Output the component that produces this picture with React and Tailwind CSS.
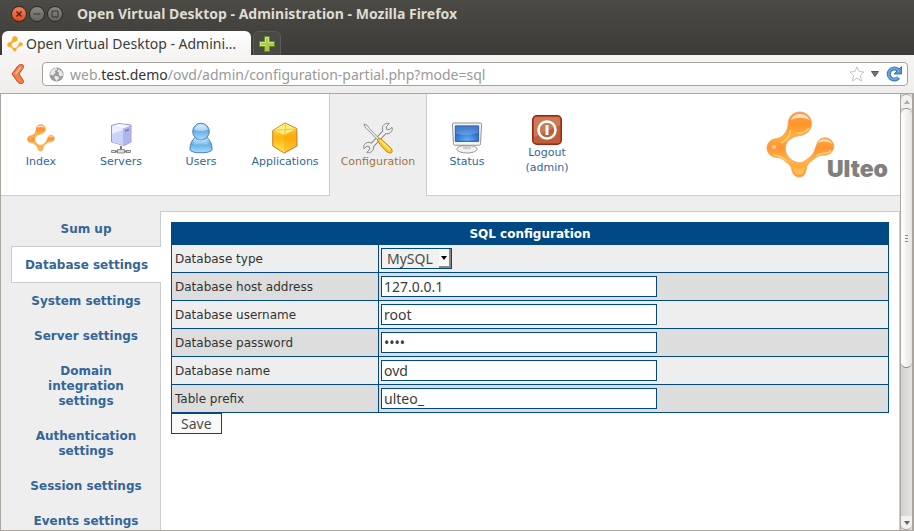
import React from "react";

const ui = "font-['Noto_Sans','Open_Sans',sans-serif]";

function MoleculeShape({ className, fill = "url(#orange)", detailed = true }) {
  return (
    <svg viewBox="-1 -1 69 68" className={className} aria-hidden="true">
      <defs>
        <linearGradient id="orange" x1="0" y1="0" x2="0" y2="1">
          <stop offset="0" stopColor="#ff9b45" />
          <stop offset="0.2" stopColor="#ff962a" />
          <stop offset="0.38" stopColor="#ffb13c" />
          <stop offset="0.55" stopColor="#ff9330" />
          <stop offset="0.75" stopColor="#ffb545" />
          <stop offset="1" stopColor="#ff9a28" />
        </linearGradient>
      </defs>
      <path
        d="M21.300 11C21.500 4 27 0 33 0s11.500 5 11.500 11.500c0 6-4.500 11-11 12C27 24 18.300 28 18.300 36.300c0 6 3.500 10 8.500 13 4 2 8 2 11-.5 5-3 9-7 10-11 .5-2 1-3 1.900-5 1-4 4-7 8.300-7 5 0 8.700 4 8.700 8.500S63 43 58 43c-6 0-9 2-12.300 5-4 3-6 5-6.500 9-.5 5-3 8-7 8s-6.700-3-7.500-8c-.7-3-2.500-5-5.700-7-3-3-6-4.500-10-4.700C4 45 0 41 0 36s4-9 9-9.200c6-.8 12-6 12.300-15.800z"
        fill={fill}
        stroke="#f0a060"
        strokeWidth="0.800"
      />
      {detailed && (
        <g>
          <path d="M24 8c1-4 5-6 9-6s8 2 9.500 6c-6-3-13-3-18.500 0zM51 31c2-5 12-5 14 1-4-3-10-3-14-1z" fill="#ffe9cc" opacity="0.900" />
          <path d="M23 18c1 6-4 11-9 13M6 43c6 0 10 3 14 6m29-5c3-2 6-3 10-3 2 0 4-1 5-3M30 21c4 1 9-1 12-5" fill="none" stroke="#ffd98c" strokeWidth="1.500" opacity="0.800" />
          <path d="M26 55c3 2 9 2 12 0-1 5-2 8-6 8s-5-3-6-8z" fill="#ffc262" opacity="0.700" />
          <ellipse cx="7" cy="35" rx="2.500" ry="2" fill="#ffc78f" />
        </g>
      )}
    </svg>
  );
}

function ServerIcon() {
  return (
    <svg viewBox="0 0 24 32" className="h-8 w-6" aria-hidden="true">
      <path d="M2.500 3.500L10 1.500l12 1.500v17l-7 3.500L2.500 20z" fill="#c3caf6" stroke="#7f84b5" strokeWidth="0.800" />
      <path d="M3 4l11 2.500V23L3 19.700z" fill="#eceeff" />
      <path d="M3 12l11-4v15L3 19.700z" fill="#c9d2fb" />
      <path d="M14 6.500L21.500 3.500v16.200L14 23z" fill="#b0b6ec" />
      <path d="M3 4l7-2 11.500 1.500-7.500 3z" fill="#f6f7ff" />
      <path d="M16 8l4-1.500v2L16 10z" fill="#7d83b5" />
      <path d="M12 24v4M3 29.500h18" stroke="#777" strokeWidth="2" />
      <path d="M8.500 27.500h7v3.500h-7zM2.500 28.500h4v2h-4zM17.500 28.500h4v2h-4z" fill="#ddd" stroke="#777" strokeWidth="0.800" />
    </svg>
  );
}

function UserIcon() {
  return (
    <svg viewBox="0 0 26 34" className="h-8 w-6" aria-hidden="true">
      <defs>
        <linearGradient id="blue" x1="0" y1="0" x2="0" y2="1">
          <stop offset="0" stopColor="#cde8fb" />
          <stop offset="0.45" stopColor="#63aee8" />
          <stop offset="1" stopColor="#a9dcfa" />
        </linearGradient>
      </defs>
      <path d="M7 16c-4 3-6 8-6 13 0 3 6 4 12 4s12-1 12-4c0-5-2-10-6-13z" fill="url(#blue)" stroke="#3e78ae" />
      <circle cx="13" cy="10" r="9" fill="url(#blue)" stroke="#3e78ae" />
      <path d="M6 8c1-7 13-7 14 0-4 2-10 2-14 0z" fill="#fff" opacity="0.45" />
      <path d="M5 24c0-5 5-6 8-6s7 1 8 6" fill="#fff" opacity="0.25" />
    </svg>
  );
}

function BoxIcon() {
  return (
    <svg viewBox="0 0 28 34" className="h-8 w-7" aria-hidden="true">
      <defs>
        <linearGradient id="gold" x1="0" y1="0" x2="0" y2="1">
          <stop offset="0" stopColor="#ffe34a" />
          <stop offset="0.5" stopColor="#ffb310" />
          <stop offset="1" stopColor="#ffe65a" />
        </linearGradient>
      </defs>
      <path d="M3 26l12 7 12.500-7V10z" fill="#888" opacity="0.350" />
      <path d="M14 1l12.500 6v18.500L13 33 1 25.500V9z" fill="url(#gold)" stroke="#c87b0c" />
      <path d="M13 13.500L26 7.500v17.500L13 32.500z" fill="#f39a06" opacity="0.350" />
      <path d="M14 1.500L26 7.500 13 13.500 1.500 9z" fill="#ffee80" />
      <path d="M14 2l1 6L2 9M15 8l11-.5M15 8l-2 5.500" fill="none" stroke="#eab22e" strokeWidth="0.800" />
    </svg>
  );
}

function ToolsIcon() {
  return (
    <svg viewBox="0 0 32 33" className="size-8" aria-hidden="true">
      <path d="M8 26L25 8" stroke="#858888" strokeWidth="5" />
      <path
        d="M27.500 1.500c-4-1-7.500 2-7 6 .5 3 3 5 6 4.500 3-.5 5-3.500 4-6.500l-3 2.500-2.500-.5-.5-2.500zM4.500 31.500c4 1 7.500-2 7-6-.5-3-3-5-6-4.500-3 .5-5 3.500-4 6.500l3-2.500 2.500.5.500 2.500z"
        fill="#ececec"
        stroke="#858888"
      />
      <path d="M9 25L24 9" stroke="#f1f2f2" strokeWidth="3" />
      <path d="M1.500 2l3.500 1.500 2 3L17 17l-1.500 1.500L5.500 8 3 6z" fill="#eee" stroke="#7d7d7d" strokeWidth="0.800" />
      <path d="M15.500 19c0-1.500 1.500-2.500 3-2l9.500 8.500c4 4 3 6.500.5 6.500-4 0-10-8-13-13z" fill="#ffc61c" stroke="#b98319" />
      <path d="M18.500 19l10 10" stroke="#ffed91" strokeWidth="1.500" />
    </svg>
  );
}

function MonitorIcon() {
  return (
    <svg viewBox="0 0 32 33" className="size-8" aria-hidden="true">
      <defs>
        <radialGradient id="screen" cx="0.5" cy="0.9" r="0.8">
          <stop offset="0" stopColor="#63adf5" />
          <stop offset="1" stopColor="#1450b5" />
        </radialGradient>
      </defs>
      <ellipse cx="16" cy="28" rx="10.500" ry="4" fill="#f2f2f2" stroke="#999" />
      <path d="M12 24h8v4h-8z" fill="#ccc" />
      <path d="M2 1h28c1 0 1 1 1 2l-1 19c0 2-1 2-2 2H4c-1 0-2 0-2-2L1 3c0-1 0-2 1-2z" fill="#f5f5f5" stroke="#8e8e8e" />
      <path d="M4 4h24v16H4z" fill="url(#screen)" stroke="#2e5ba2" />
      <path d="M4.500 4.500h23V11c-8 3-15 3-23 1z" fill="#8fc3f6" opacity="0.4" />
    </svg>
  );
}

function PowerIcon() {
  return (
    <svg viewBox="0 0 30 30" className="size-[30px]" aria-hidden="true">
      <rect x="0.750" y="0.750" width="28.500" height="28.500" rx="4" fill="#bd6039" stroke="#a32014" strokeWidth="1.500" />
      <path d="M2 5c0-2 1-3 3-3h20c2 0 3 1 3 3v5L2 22z" fill="#d58c69" opacity="0.600" />
      <circle cx="15" cy="15" r="8.500" fill="none" stroke="#fff" strokeWidth="2.500" />
      <path d="M15 10v10" stroke="#fff" strokeWidth="3" />
    </svg>
  );
}

const navItems = [
  { label: "Index", icon: <MoleculeShape className="mt-0.5 mb-0.5 size-7" />, width: "w-20" },
  { label: "Servers", icon: <ServerIcon />, width: "w-20" },
  { label: "Users", icon: <UserIcon />, width: "w-20" },
  { label: "Applications", icon: <BoxIcon />, width: "w-[88px]" },
  { label: "Configuration", icon: <ToolsIcon />, width: "w-[98px]", active: true },
  { label: "Status", icon: <MonitorIcon />, width: "w-20" },
  { label: "Logout (admin)", icon: <PowerIcon />, width: "w-20" },
];

const sideItems = [
  "Sum up",
  "Database settings",
  "System settings",
  "Server settings",
  "Domain integration settings",
  "Authentication settings",
  "Session settings",
  "Events settings",
];

const fields = [
  { id: "type", label: "Database type", select: true },
  { id: "host", label: "Database host address", value: "127.0.0.1" },
  { id: "user", label: "Database username", value: "root" },
  { id: "password", label: "Database password", value: "ovd1", type: "password" },
  { id: "name", label: "Database name", value: "ovd" },
  { id: "prefix", label: "Table prefix", value: "ulteo_" },
];

function TitleBar() {
  const button = "flex size-4 items-center justify-center rounded-full border border-[#2b2a27]";
  return (
    <div className="flex h-[31px] shrink-0 items-center gap-[2px] pb-[3px] pl-[11px]">
      <button aria-label="Close" className={`${button} bg-linear-to-b from-[#f58059] to-[#df4a1b]`}>
        <svg viewBox="0 0 8 8" className="size-2"><path d="M1.500 1.500l5 5m0-5l-5 5" stroke="#4a1c0c" strokeWidth="1.200" /></svg>
      </button>
      <button aria-label="Minimize" className={`${button} bg-linear-to-b from-[#8b887f] to-[#66645d]`}>
        <svg viewBox="0 0 8 8" className="size-2"><path d="M0.500 4h7" stroke="#33322e" /></svg>
      </button>
      <button aria-label="Maximize" className={`${button} bg-linear-to-b from-[#8b887f] to-[#66645d]`}>
        <svg viewBox="0 0 8 8" className="size-2"><path d="M1 1h6v6H1z" fill="none" stroke="#33322e" /></svg>
      </button>
      <h1 className="ml-3 truncate text-sm font-bold text-[#dfdbd2]">
        Open Virtual Desktop - Administration - Mozilla Firefox
      </h1>
    </div>
  );
}

function TabStrip() {
  return (
    <div className="flex h-6 shrink-0 gap-0.5 pl-0.5">
      <button className="flex w-[249px] items-center gap-[3px] rounded-t-md bg-linear-to-b from-white to-[#f5f4f2] px-[5px] pt-0.5 text-sm text-[#3c3c3c]">
        <MoleculeShape className="size-4 shrink-0" fill="#fbae17" detailed={false} />
        <span className="whitespace-nowrap">Open Virtual Desktop - Admini…</span>
      </button>
      <button aria-label="New tab" className="flex w-7 items-center justify-center rounded-t-md border border-b-0 border-[#5c5b55] bg-[#4a4944]">
        <svg viewBox="0 0 16 16" className="size-4"><path d="M5.500.5h5v5h5v5h-5v5h-5v-5h-5v-5h5z" fill="#a9cb45" stroke="#5f8f1d" /><path d="M6.500 10V9.500h-5v-3h5v-5h3v5h5" fill="none" stroke="#d3e88d" /></svg>
      </button>
    </div>
  );
}

function AddressBar() {
  return (
    <div className="flex h-[39px] shrink-0 items-center border-b border-[#aaa69f] bg-linear-to-b from-[#f6f5f3] to-[#efeeec] pr-[6px] pl-[11px]">
      <button aria-label="Back" className="w-[31px]">
        <svg viewBox="0 0 13 20" className="h-5 w-[13px]"><path d="M10.500.5c2 0 2.500 2 1.500 3.500L8 10l4 6c1 2 .5 3.500-1.500 3.500S7 19 6 17l-5-7 5-7c1-1.500 2.500-2.500 4.500-2.500z" fill="#f07f4b" stroke="#cc481b" /><path d="M10 3L4.500 10" stroke="#f9b48a" strokeWidth="2" /></svg>
      </button>
      <div className="flex h-6 min-w-0 grow items-center rounded border border-[#a6a29a] bg-white pr-[5px] pl-[6px]">
        <svg viewBox="0 0 16 16" className="mr-[6px] size-[15px] shrink-0"><circle cx="8" cy="8" r="7.500" fill="#999" /><path d="M2 4c2-2 4-3 6-3l1 2-3 1 1 2-3 3-3-1zM10 2l4 3 1 4-3 1-2-2 1-2-2-1zM6 9l4 1 1 2-3 3-2-3z" fill="#e9e9e9" /></svg>
        <div className="min-w-0 grow truncate pt-0.5 text-sm text-[#999]">
          web.<span className="text-[#333]">test.demo</span>/ovd/admin/configuration-partial.php?mode=sql
        </div>
        <svg viewBox="0 0 16 16" className="mr-1.5 size-4 shrink-0"><path d="M8 1l2 4.500 5 .5-3.700 3.500L12.500 15 8 12l-4.500 3 1.200-5.500L1 6l5-.5z" fill="#fff" stroke="#c4c4c4" strokeLinejoin="round" /></svg>
        <svg viewBox="0 0 8 6" className="mr-[7px] h-[6px] w-2 shrink-0"><path d="M0.500.5h7L4 5.500z" fill="#777" stroke="#555" /></svg>
        <button aria-label="Reload">
          <svg viewBox="0 0 16 16" className="size-4"><path d="M12.500 11.500A5.500 5.500 0 1 1 12 4" fill="none" stroke="#3c78b8" strokeWidth="4" /><path d="M15.500.5V8H8z" fill="#5b94cf" stroke="#3c78b8" /><path d="M12.200 11.500A5.500 5.500 0 1 1 12 4l1 2" fill="none" stroke="#6ea4da" strokeWidth="2" /></svg>
        </button>
      </div>
    </div>
  );
}

function Header() {
  return (
    <header className="flex shrink-0 bg-white">
      <nav className="flex text-[11px] leading-[15px]">
        {navItems.map((item) => (
          <a
            key={item.label}
            href="#"
            className={`${item.width} flex h-[102px] flex-col items-center justify-center px-1 pt-px text-center ${
              item.active ? "border-x border-[#ccc] bg-[#eee] text-[#a5703f]" : "border-b border-[#ccc] text-[#336699]"
            }`}
          >
            {item.icon}
            <span>{item.label}</span>
          </a>
        ))}
      </nav>
      <div className="flex grow items-center justify-end border-b border-[#ccc] pr-3">
        <MoleculeShape className="h-[68px] w-[69px]" />
        <span className="-ml-2 self-end pb-3 font-['Inter',sans-serif] text-[23px] leading-7 font-black text-[#808080]">
          Ulteo
        </span>
      </div>
    </header>
  );
}

function Sidebar() {
  return (
    <nav className="flex w-[159px] shrink-0 flex-col pl-[10px] text-center text-xs leading-[15px] font-bold text-[#336699]">
      {sideItems.map((label) => (
        <a
          key={label}
          href="#"
          className={
            label === "Database settings"
              ? "relative -mr-px border border-r-0 border-[#ccc] bg-white px-3 pt-[11px] pb-[9px]"
              : "pt-[11px] pr-[11px] pb-[9px] pl-3"
          }
        >
          {label}
        </a>
      ))}
    </nav>
  );
}

function SettingsForm() {
  const line = "border border-[#004985]";
  return (
    <form className="min-w-0 grow border border-b-0 border-[#ccc] bg-white p-[10px]" onSubmit={(e) => e.preventDefault()}>
      <table className={`w-full table-fixed border-collapse text-xs text-[#333] ${line}`}>
        <colgroup>
          <col className="w-[207px]" />
          <col />
        </colgroup>
        <thead>
          <tr className="h-[22px] bg-[#004985] text-white">
            <th colSpan={2}>SQL configuration</th>
          </tr>
        </thead>
        <tbody>
          {fields.map((f) => (
            <tr key={f.id} className="h-7 odd:bg-[#eee] even:bg-[#ddd]">
              <td className={`${line} px-[3px] py-0`}>
                <label htmlFor={f.id}>{f.label}</label>
              </td>
              <td className={`${line} px-[2px] py-0`}>
                {f.select ? (
                  <div className="relative flex w-[71px]">
                    <select id={f.id} className={`${ui} ${line} h-[21px] w-full appearance-none bg-[#f2f1f0] px-[5px] text-sm leading-[19px] text-[#4c4c4c]`}>
                      <option>MySQL</option>
                    </select>
                    <span className="pointer-events-none absolute top-px right-px flex h-[19px] w-3 items-center justify-center border-r-2 border-b-2 border-[#888] bg-[#f8f8f7]">
                      <svg viewBox="0 0 6 4" className="h-1 w-1.5"><path d="M0 0h6L3 4z" fill="#000" /></svg>
                    </span>
                  </div>
                ) : (
                  <input
                    id={f.id}
                    type={f.type || "text"}
                    defaultValue={f.value}
                    className={`${ui} ${line} block h-[21px] w-[276px] bg-white px-[2px] text-sm text-[#3c3c3c]`}
                  />
                )}
              </td>
            </tr>
          ))}
        </tbody>
      </table>
      <button className={`${ui} ${line} flex h-[21px] items-center bg-[#f9f9f8] px-[9px] text-sm text-[#4c4c4c]`}>Save</button>
    </form>
  );
}

function Scrollbar() {
  return (
    <div className="flex w-[13px] shrink-0 flex-col border-x border-[#aaa69f] bg-linear-to-r from-[#d2d1cf] to-[#e4e3e1]" aria-hidden="true">
      <div className="flex h-[14px] items-center justify-center rounded-t-full border-t border-[#aaa69f] bg-[#f2f1f0]">
        <svg viewBox="0 0 6 4" className="h-1 w-1.5"><path d="M0 4h6L3 0z" fill="#aaa" /></svg>
      </div>
      <div className="flex h-[260px] flex-col items-center justify-center gap-[2px] rounded-full border-y border-[#8f8c86] bg-linear-to-r from-white to-[#e6e5e3]">
        <i className="h-px w-[3px] bg-[#888]" />
        <i className="h-px w-[3px] bg-[#888]" />
        <i className="h-px w-[3px] bg-[#888]" />
      </div>
      <div className="mt-auto flex h-[14px] items-center justify-center rounded-b-full border-b border-[#aaa69f] bg-[#f2f1f0]">
        <svg viewBox="0 0 6 4" className="h-1 w-1.5"><path d="M0 0h6L3 4z" fill="#666" /></svg>
      </div>
    </div>
  );
}

export default function App() {
  return (
    <div className={`${ui} flex h-screen flex-col overflow-hidden bg-linear-to-b from-[#4b4a45] to-[#3c3b37] to-[55px]`}>
      <TitleBar />
      <TabStrip />
      <AddressBar />
      <div className="flex min-h-0 grow border-x border-b border-[#aaa69f]">
        <main className="flex min-w-0 grow flex-col overflow-hidden bg-[#eee] font-['DejaVu_Sans',Verdana,sans-serif]">
          <Header />
          <div className="mt-[15px] flex min-h-0 grow">
            <Sidebar />
            <SettingsForm />
          </div>
        </main>
        <Scrollbar />
      </div>
    </div>
  );
}
